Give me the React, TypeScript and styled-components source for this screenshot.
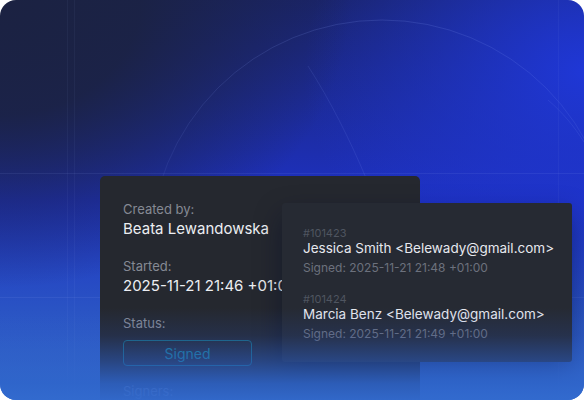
import React from 'react';
import styled, { createGlobalStyle } from 'styled-components';

const GlobalStyle = createGlobalStyle`
  html, body {
    margin: 0;
    padding: 0;
    background: #ffffff;
  }
  body {
    font-family: Inter, "Noto Sans", "Liberation Sans", sans-serif;
    -webkit-font-smoothing: antialiased;
  }
`;

// fundo azul com cantos arredondados
const Frame = styled.div`
  position: relative;
  width: 584px;
  height: 400px;
  border-radius: 16px;
  overflow: hidden;
  box-sizing: border-box;
  padding: 176px 0 0 100px;
  background:
    radial-gradient(ellipse 60% 72% at 0% 0%, #1b2242 0%, rgba(27, 34, 66, 0.92) 40%, rgba(27, 34, 66, 0) 100%),
    radial-gradient(ellipse 48% 60% at 100% 18%, #1f37d6 0%, rgba(31, 55, 214, 0) 100%),
    linear-gradient(180deg, #1a246c 0%, #1e31c2 50%, #2a54c4 78%, #3a72d0 100%);

  &::after {
    content: '';
    position: absolute;
    left: 0;
    right: 0;
    bottom: 0;
    height: 92px;
    background: linear-gradient(
      180deg,
      rgba(40, 80, 190, 0) 0%,
      rgba(40, 84, 192, 0.18) 30%,
      rgba(44, 94, 198, 0.55) 58%,
      rgba(46, 100, 202, 0.88) 82%,
      rgba(50, 106, 206, 0.97) 100%
    );
    pointer-events: none;
    z-index: 3;
  }
`;

const Decor = styled.svg`
  position: absolute;
  inset: 0;
  pointer-events: none;
`;

// os dois cartões se sobrepõem numa grade
const Stage = styled.div`
  position: relative;
  display: grid;
  grid-template-columns: 182px 138px 152px;
  grid-template-rows: 27px 159px auto;
`;

const DetailsCard = styled.div`
  grid-column: 1 / 3;
  grid-row: 1 / 4;
  background: #25282f;
  border-radius: 5px;
  padding: 24px 23px 40px;
  height: 260px;
  box-sizing: border-box;
  overflow: hidden;
`;

const Label = styled.div<{ $gap?: number }>`
  font-size: 13px;
  line-height: 18px;
  color: #858a94;
  margin-top: ${(p) => p.$gap ?? 0}px;
`;

const Value = styled.div`
  font-size: 15px;
  line-height: 22px;
  color: #eceef2;
  white-space: nowrap;
`;

const StatusBadge = styled.div`
  margin-top: 8px;
  width: 129px;
  height: 26px;
  box-sizing: border-box;
  border: 1px solid #1a6a7c;
  border-radius: 4px;
  display: flex;
  align-items: center;
  justify-content: center;
  font-size: 14px;
  color: #1b8195;
`;

const SignersCard = styled.div`
  grid-column: 2 / 4;
  grid-row: 2 / 3;
  z-index: 1;
  background: #262a33;
  border-radius: 3px;
  padding: 23px 21px 20px;
  box-shadow: 0 12px 28px rgba(5, 10, 40, 0.45);
  display: flex;
  flex-direction: column;
  gap: 16px;
`;

const Signer = styled.div`
  display: flex;
  flex-direction: column;
`;

const SignerId = styled.div`
  font-size: 11px;
  line-height: 14px;
  color: #4f5560;
`;

const SignerName = styled.div`
  font-size: 13.5px;
  line-height: 16px;
  color: #e6e8ee;
  white-space: nowrap;
`;

const SignedAt = styled.div`
  margin-top: 4px;
  font-size: 12px;
  line-height: 16px;
  color: #6c717d;
  white-space: nowrap;
`;

const signers = [
  { id: '#101423', name: 'Jessica Smith', email: 'Belewady@gmail.com', at: '2025-11-21 21:48 +01:00' },
  { id: '#101424', name: 'Marcia Benz', email: 'Belewady@gmail.com', at: '2025-11-21 21:49 +01:00' },
];

const App: React.FC = () => {
  return (
    <>
      <GlobalStyle />
      <Frame>
        {/* linhas e arcos do fundo */}
        <Decor width="584" height="400" viewBox="0 0 584 400">
          <defs>
            <linearGradient id="arcFade" x1="0" y1="0" x2="0" y2="1">
              <stop offset="0" stopColor="rgb(140,165,255)" stopOpacity="0.16" />
              <stop offset="0.5" stopColor="rgb(140,165,255)" stopOpacity="0.05" />
              <stop offset="1" stopColor="rgb(140,165,255)" stopOpacity="0" />
            </linearGradient>
          </defs>
          <g fill="none" stroke="url(#arcFade)" strokeWidth="1">
            <circle cx="382" cy="252" r="232" />
          </g>
          <g fill="none" stroke="rgba(140,165,255,0.12)" strokeWidth="1">
            <path d="M308 66 C 330 100, 350 140, 366 178" />
            <path d="M548 100 C 562 112, 574 126, 584 142" />
          </g>
          <g stroke="rgba(170,190,255,0.09)" strokeWidth="1">
            <line x1="0" y1="173.5" x2="584" y2="173.5" />
            <line x1="0" y1="297.5" x2="584" y2="297.5" />
          </g>
          <g stroke="rgba(170,190,255,0.05)" strokeWidth="1">
            <line x1="67.5" y1="0" x2="67.5" y2="400" />
            <line x1="74.5" y1="0" x2="74.5" y2="400" />
            <line x1="558.5" y1="0" x2="558.5" y2="400" />
          </g>
        </Decor>

        <Stage>
          <DetailsCard>
            <Label>Created by:</Label>
            <Value>Beata Lewandowska</Value>
            <Label $gap={17}>Started:</Label>
            <Value>2025-11-21 21:46 +01:00</Value>
            <Label $gap={17}>Status:</Label>
            <StatusBadge>Signed</StatusBadge>
            <Label $gap={16}>Signers:</Label>
          </DetailsCard>

          <SignersCard>
            {signers.map((s) => (
              <Signer key={s.id}>
                <SignerId>{s.id}</SignerId>
                <SignerName>
                  {s.name} &lt;{s.email}&gt;
                </SignerName>
                <SignedAt>Signed: {s.at}</SignedAt>
              </Signer>
            ))}
          </SignersCard>
        </Stage>
      </Frame>
    </>
  );
};

export default App;
